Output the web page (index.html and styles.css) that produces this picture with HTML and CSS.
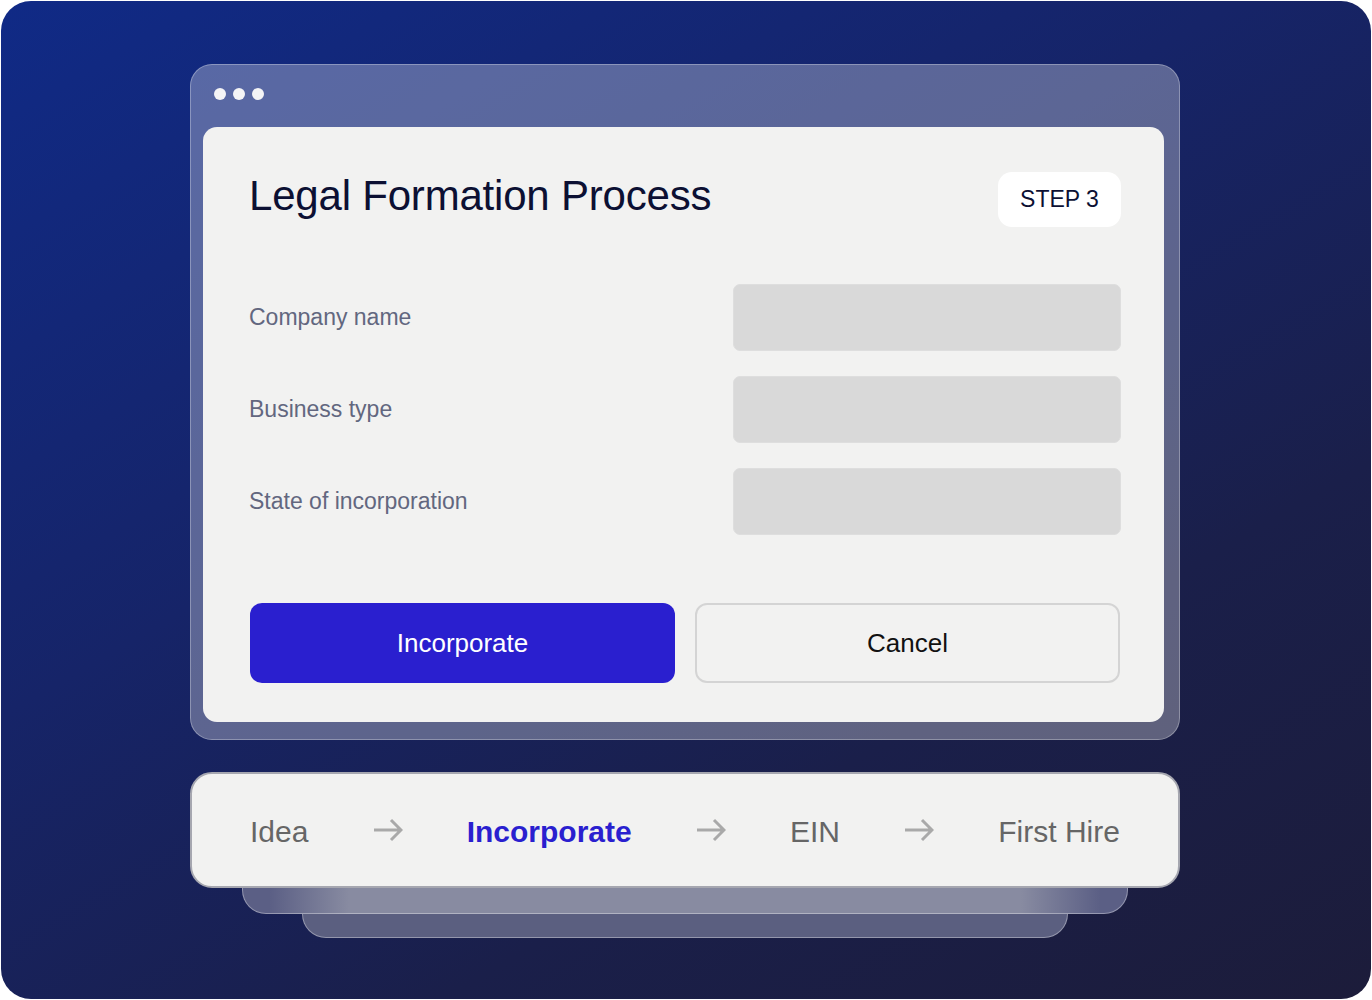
FILE: index.html
```html
<!DOCTYPE html>
<html lang="en">
<head>
    <meta charset="UTF-8">
    <meta name="viewport" content="width=device-width, initial-scale=1.0">
    <title>Legal Formation Process</title>
    <link rel="stylesheet" href="styles.css">
</head>
<body>
    <div class="scene">
        <div class="window">
            <div class="window-bar">
                <span class="dot"></span>
                <span class="dot"></span>
                <span class="dot"></span>
            </div>
            <div class="card">
                <div class="card-head">
                    <h1>Legal Formation Process</h1>
                    <span class="step">STEP 3</span>
                </div>

                <div class="fields">
                    <div class="field">
                        <label>Company name</label>
                        <div class="input"></div>
                    </div>
                    <div class="field">
                        <label>Business type</label>
                        <div class="input"></div>
                    </div>
                    <div class="field">
                        <label>State of incorporation</label>
                        <div class="input"></div>
                    </div>
                </div>

                <div class="actions">
                    <button class="btn btn-primary">Incorporate</button>
                    <button class="btn btn-ghost">Cancel</button>
                </div>
            </div>
        </div>

        <div class="progress-wrap">
            <div class="layer layer-back"></div>
            <div class="layer layer-mid"></div>
            <div class="progress">
                <span class="stage">Idea</span>
                <svg class="arrow" viewBox="0 0 30 24"><path d="M1 12h27M18 2l10 10-10 10"/></svg>
                <span class="stage active">Incorporate</span>
                <svg class="arrow" viewBox="0 0 30 24"><path d="M1 12h27M18 2l10 10-10 10"/></svg>
                <span class="stage">EIN</span>
                <svg class="arrow" viewBox="0 0 30 24"><path d="M1 12h27M18 2l10 10-10 10"/></svg>
                <span class="stage">First Hire</span>
            </div>
        </div>
    </div>
</body>
</html>
```

FILE: styles.css
```css
body {
    margin: 0;
    background-color: #ffffff;
    font-family: "Liberation Sans", Arial, sans-serif;
}
.scene {
    margin: 1px;
    height: 998px;
    box-sizing: border-box;
    border-radius: 30px;
    padding: 63px 0 0 189px;
    background: linear-gradient(150deg, #102a86 0%, #162468 40%, #1a1f4a 70%, #1c1c3a 100%);
    overflow: hidden;
}
.window {
    width: 990px;
    box-sizing: border-box;
    padding: 0 15px 17px 12px;
    border-radius: 22px;
    background-color: rgba(255, 255, 255, 0.3);
    border: 1px solid rgba(255, 255, 255, 0.3);
}
.window-bar {
    height: 62px;
    display: flex;
    align-items: center;
    gap: 7px;
    padding-left: 11px;
    padding-bottom: 4px;
    box-sizing: border-box;
}
.dot {
    width: 12px;
    height: 12px;
    border-radius: 50%;
    background-color: #f4f4f6;
}
.card {
    background-color: #f2f2f1;
    border-radius: 14px;
    padding: 45px 43px 39px 46px;
}
.card-head {
    display: flex;
    justify-content: space-between;
    align-items: center;
    height: 55px;
}
h1 {
    margin: 0;
    padding-bottom: 8px;
    font-size: 42px;
    font-weight: 400;
    color: #0c1033;
    letter-spacing: -0.2px;
}
.step {
    width: 123px;
    height: 55px;
    display: flex;
    align-items: center;
    justify-content: center;
    background-color: #ffffff;
    border-radius: 14px;
    font-size: 23px;
    color: #0c1033;
}
.fields {
    margin-top: 57px;
    display: flex;
    flex-direction: column;
    gap: 25px;
}
.field {
    display: flex;
    align-items: center;
    justify-content: space-between;
}
.field label {
    font-size: 23px;
    color: #62677f;
}
.input {
    width: 388px;
    height: 67px;
    box-sizing: border-box;
    background-color: #d9d9d9;
    border: 1px solid #dedede;
    border-radius: 7px;
}
.actions {
    margin-top: 68px;
    display: grid;
    grid-template-columns: 1fr 1fr;
    gap: 20px;
    padding-left: 1px;
    padding-right: 1px;
}
.btn {
    height: 80px;
    border-radius: 12px;
    font-family: "Liberation Sans", Arial, sans-serif;
    font-size: 26px;
    cursor: pointer;
}
.btn-primary {
    border: none;
    background-color: #2a1fcf;
    color: #ffffff;
}
.btn-ghost {
    border: 2px solid #d4d4d4;
    background-color: #f2f2f1;
    color: #111111;
}
.progress-wrap {
    position: relative;
    width: 990px;
    margin-top: 32px;
}
.progress {
    position: relative;
    height: 116px;
    box-sizing: border-box;
    display: flex;
    align-items: center;
    justify-content: space-between;
    padding: 3px 58px 0 58px;
    background-color: #f2f2f1;
    border: 2px solid #a6a7b0;
    border-radius: 22px;
}
.stage {
    font-size: 30px;
    color: #666666;
}
.stage.active {
    color: #2a1fcf;
    font-weight: 700;
}
.arrow {
    width: 30px;
    height: 24px;
    margin-top: -3px;
    fill: none;
    stroke: #a9a9a9;
    stroke-width: 3;
}
.layer {
    position: absolute;
    border: 1px solid rgba(255, 255, 255, 0.35);
    border-radius: 24px;
}
.layer-mid {
    left: 52px;
    right: 52px;
    top: 60px;
    height: 80px;
    background: linear-gradient(90deg, #5b5f85 0%, #5b5f85 3%, #888ba1 12%, #888ba1 88%, #5b5f85 97%, #5b5f85 100%);
}
.layer-back {
    left: 112px;
    right: 112px;
    top: 90px;
    height: 74px;
    background-color: #5b5f80;
}
```
